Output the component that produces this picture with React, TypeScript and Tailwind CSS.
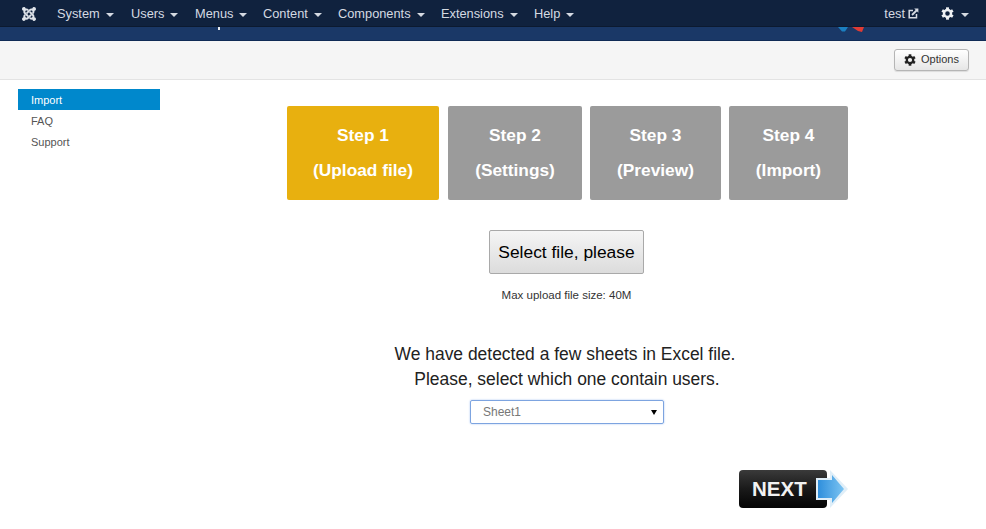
import { FaJoomla } from 'react-icons/fa';

const menus = [
  { label: 'System', w: 'w-[74px]' },
  { label: 'Users', w: 'w-[64px]' },
  { label: 'Menus', w: 'w-[68px]' },
  { label: 'Content', w: 'w-[75px]' },
  { label: 'Components', w: 'w-[103px]' },
  { label: 'Extensions', w: 'w-[93px]' },
  { label: 'Help', w: 'w-[50px]' },
];

const steps = [
  { a: 'Step 1', b: '(Upload file)', w: 'w-[152px] mr-[1px]', bg: 'bg-[#e8b00f]' },
  { a: 'Step 2', b: '(Settings)', w: 'w-[134px]', bg: 'bg-[#9b9b9b]' },
  { a: 'Step 3', b: '(Preview)', w: 'w-[131px]', bg: 'bg-[#9b9b9b]' },
  { a: 'Step 4', b: '(Import)', w: 'w-[119px]', bg: 'bg-[#9b9b9b]' },
];

function Caret() {
  return <span className="inline-block ml-[6px] align-middle w-0 h-0 border-x-[4px] border-x-transparent border-t-[4px] border-t-[#d5dae2]" />;
}

function Gear({ className }: { className: string }) {
  return (
    <svg className={className} viewBox="0 0 16 16" fill="currentColor">
      <circle cx="8" cy="8" r="4.3" fill="none" stroke="currentColor" strokeWidth="3" />
      {[0, 60, 120, 180, 240, 300].map((deg) => (
        <rect key={deg} x="6.2" y="0.4" width="3.6" height="3.4" transform={`rotate(${deg} 8 8)`} />
      ))}
    </svg>
  );
}

function ExternalIcon() {
  return (
    <svg className="ml-[3px] w-[11px] h-[11px]" viewBox="0 0 11 11" fill="none" stroke="#d5dae2">
      <path d="M5 2.5H1.2V9.8H8.5V6" strokeWidth="1.5" />
      <path d="M4 7L9 2" strokeWidth="1.8" />
      <path d="M6.2 0.6H10.4V4.8Z" fill="#d5dae2" stroke="none" />
    </svg>
  );
}

function NextButton() {
  return (
    <div className="relative w-[109px] h-[40px]">
      <div className="w-[88px] h-[38px] mt-[1px] rounded-[4px] bg-gradient-to-b from-[#3a3a3a] via-[#1a1a1a] to-[#050505] flex items-center pl-[13px] text-[20.5px] leading-none font-bold text-[#f2f2f2]">
        NEXT
      </div>
      <svg className="absolute left-[76px] top-0" width="34" height="40" viewBox="0 0 34 40">
        <defs>
          <linearGradient id="arrowFill" x1="0" y1="0" x2="1" y2="0">
            <stop offset="0" stopColor="#2f8fdc" />
            <stop offset="1" stopColor="#7cc4f2" />
          </linearGradient>
        </defs>
        <path d="M1 9 H15 V1 L33 20 L15 39 V31 H1 Z" fill="#dfeef8" />
        <path d="M3 11 H17 V6 L29 20 L17 34 V29 H3 Z" fill="url(#arrowFill)" />
      </svg>
    </div>
  );
}

export default function App() {
  return (
    <div className="min-h-[529px] bg-white font-['Liberation_Sans',Arial,sans-serif] text-[#333] overflow-hidden">
      <nav className="h-[27px] pt-[1px] bg-[#10223e] border-b border-[#0c1a30] flex items-center text-[12.8px] text-[#d5dae2]">
        <div className="w-[57px] flex justify-center">
          <FaJoomla className="text-[#dfe4ea] text-[16px]" />
        </div>
        {menus.map((m) => (
          <div key={m.label} className={`${m.w} whitespace-nowrap`}>
            {m.label}
            <Caret />
          </div>
        ))}
        <div className="ml-auto flex items-center">
          <span>test</span>
          <ExternalIcon />
          <Gear className="ml-[22px] w-[13px] h-[13px] text-[#eef1f4]" />
          <span className="mr-[17px] ml-[1px]"><Caret /></span>
        </div>
      </nav>

      <div className="relative h-[14px] bg-[#1a3867] border-b border-[#0f2a55]">
        <span className="absolute left-[218px] top-0 w-[2px] h-[3px] bg-white/90" />
        <svg className="absolute left-[836px] top-0" width="30" height="6" viewBox="0 0 30 6">
          <path d="M2 0H12L9 4.5H6Z" fill="#1b7fc0" />
          <path d="M16 0H28L26 5L22 4Z" fill="#e03b34" />
        </svg>
      </div>

      <div className="h-[39px] bg-[#f5f5f5] border-b border-[#e3e3e3] flex items-center justify-end pr-[17px]">
        <button className="h-[22px] w-[75px] mb-[1px] rounded-[3px] border border-[#b5b5b5] bg-gradient-to-b from-white to-[#e6e6e6] flex items-center justify-center text-[11px] text-[#333] shadow-[0_1px_1px_rgba(0,0,0,0.1)]">
          <Gear className="w-[12px] h-[12px] mr-[5px] text-[#222]" />
          Options
        </button>
      </div>

      <div className="flex">
        <aside className="w-[287px] pl-[18px] pt-[9px] shrink-0">
          <ul className="w-[142px] text-[11px]">
            <li className="h-[21px] leading-[23px] pl-[13px] bg-[#0088cc] text-white">Import</li>
            <li className="h-[21px] leading-[23px] pl-[13px] text-[#555]">FAQ</li>
            <li className="h-[21px] leading-[23px] pl-[13px] text-[#555]">Support</li>
          </ul>
        </aside>

        <main className="w-[561px] pr-[1px] pt-[26px] flex flex-col items-center">
          <div className="flex gap-[8px] w-[561px] -mr-[1px] shrink-0">
            {steps.map((s) => (
              <div key={s.a} className={`${s.w} ${s.bg} h-[94px] rounded-[2px] flex flex-col items-center justify-center text-white font-bold text-[17.3px] gap-[14px] leading-[21px] pb-[1px]`}>
                <span>{s.a}</span>
                <span>{s.b}</span>
              </div>
            ))}
          </div>

          <button className="mt-[30px] mr-[1px] w-[155px] h-[44px] border border-[#a9a9a9] rounded-[2px] bg-gradient-to-b from-[#f5f5f5] to-[#dcdcdc] text-[17.4px] text-black">
            Select file, please
          </button>
          <p className="mt-[14px] mr-[1px] text-[11.5px] leading-[14px] text-[#333]">Max upload file size: 40M</p>

          <p className="mt-[40px] mr-[4px] text-[17.45px] leading-[25px] text-[#222] text-center">
            We have detected a few sheets in Excel file.
            <br />
            <span className="ml-[4px]">Please, select which one contain users.</span>
          </p>

          <div className="mt-[8px] w-[194px] h-[24px] border border-[#7da4e0] rounded-[2px] shadow-[0_0_2px_#9fbdf0] flex items-center justify-between pl-[12px] pr-[6px] text-[12px] text-[#777]">
            <span>Sheet1</span>
            <span className="w-0 h-0 border-x-[3px] border-x-transparent border-t-[5px] border-t-black" />
          </div>

          <div className="w-[561px] -mr-[1px] shrink-0 flex justify-end mt-[45px] pl-[2px]">
            <NextButton />
          </div>
        </main>
      </div>
    </div>
  );
}
